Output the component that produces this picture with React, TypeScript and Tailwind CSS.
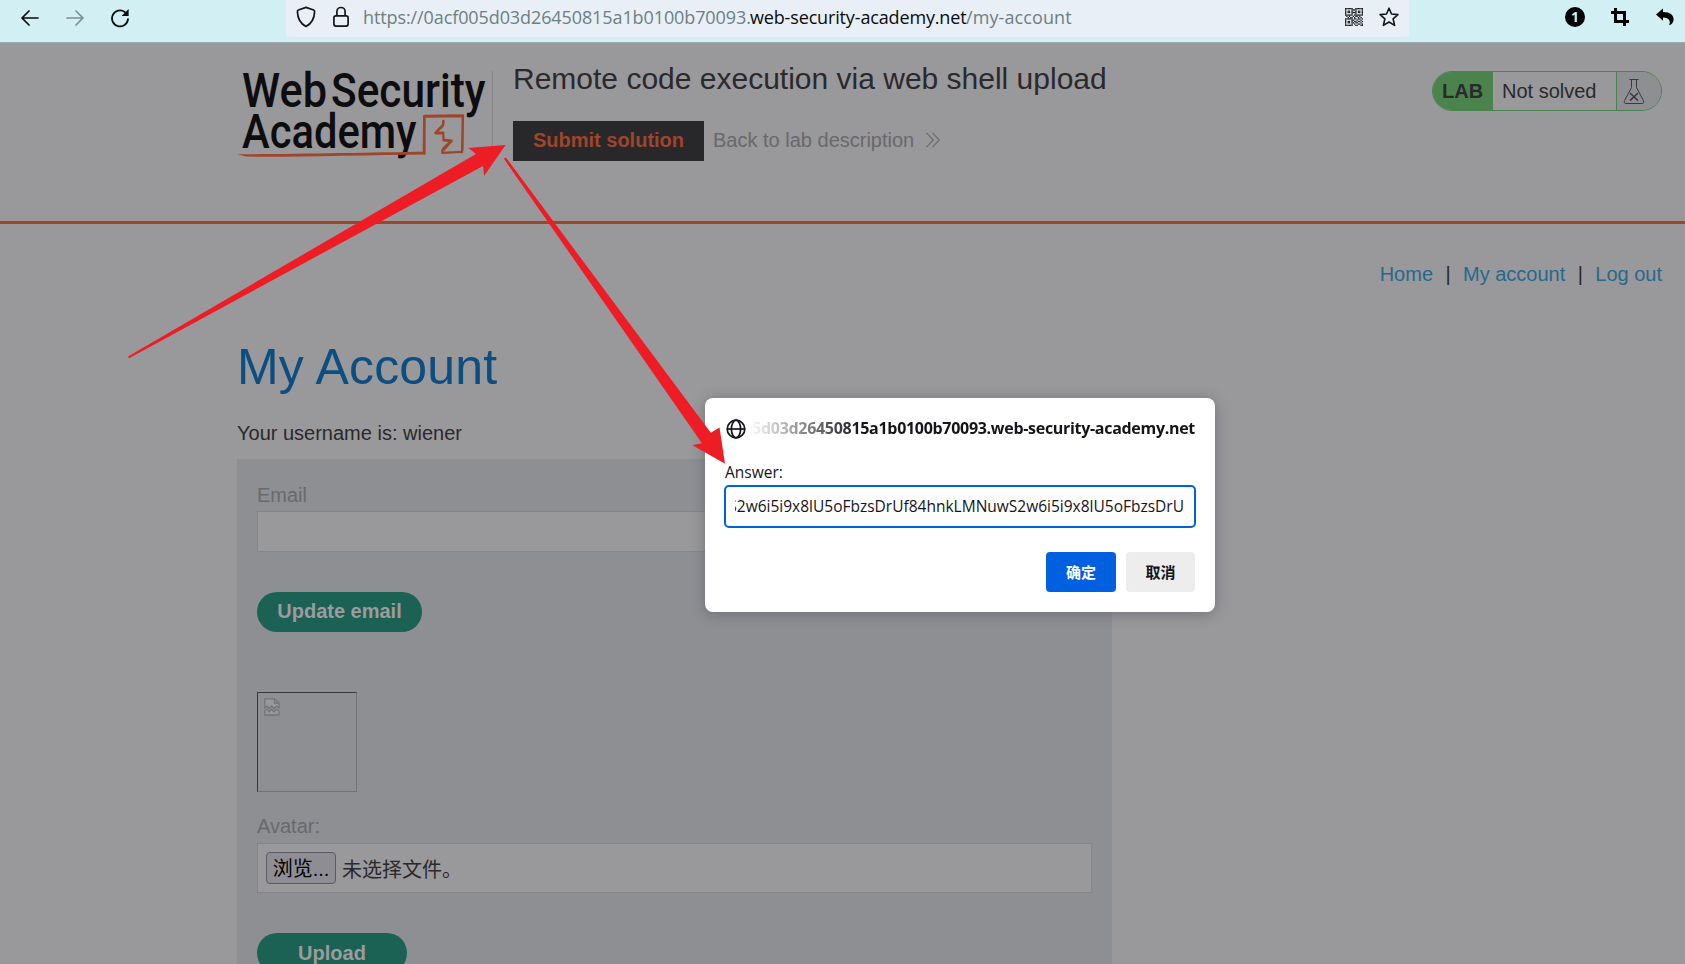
import React from "react";

const PageLogo = () => (
  <svg width="256" height="94" viewBox="237 69 256 94" className="block shrink-0">
    <g fill="#0d0d10" fontFamily="Roboto, sans-serif" fontWeight="500" fontSize="48.6">
      <text x="242" y="107.3" textLength="85" lengthAdjust="spacingAndGlyphs">Web</text>
      <text x="331" y="107.3" textLength="154.5" lengthAdjust="spacingAndGlyphs">Security</text>
      <text x="242" y="147.7" textLength="174.5" lengthAdjust="spacingAndGlyphs">Academy</text>
    </g>
    <g fill="none" stroke="#9e452c" strokeLinejoin="round" strokeLinecap="round">
      <path strokeWidth="2.2" d="M424.5 153.6 L424.6 115.8 L463 115.3 L462 152.3" />
      <path strokeWidth="1.8" d="M425 116.8 L463 116.3 M424 116 L423.6 153 M462.6 116 L462.6 150" />
      <path strokeWidth="2.3" d="M462 151.8 L442.3 152.8 C441.5 148.5 445 147 451.5 140.6 L443.5 139.6 L443.2 132.6 L435.5 132.8 L443.3 124.5 L443.4 121" />
      <path strokeWidth="1.8" d="M443.4 121 L442.6 126.5 L435.3 133 M452 141 L444 150 M436 133.6 L443 133.6 M443.5 140.6 L451 141.2" />
    </g>
    <path fill="#9e452c" d="M237.5 154.2 C290 154.4 370 152.4 425.3 151.8 L425.3 154.4 C370 155 300 157 246 156.6 Z" />
    <path stroke="#858488" strokeWidth="1" d="M492.5 71 V149" />
  </svg>
);

const Shield = () => (
  <svg width="20" height="22" viewBox="0 0 20 22" fill="none" stroke="#15141a" strokeWidth="1.7" strokeLinejoin="round">
    <path d="M10 1.4 L17.6 4 C18.4 4.3 18.7 4.8 18.6 5.6 C18.4 12 16.8 17 10 20.4 C3.2 17 1.6 12 1.4 5.6 C1.3 4.8 1.6 4.3 2.4 4 Z" />
  </svg>
);

const Lock = () => (
  <svg width="18" height="22" viewBox="0 0 18 22" fill="none" stroke="#15141a" strokeWidth="1.7">
    <rect x="1.9" y="9.9" width="14.2" height="10.2" rx="2" />
    <path d="M4.9 10 V5.6 a4.1 4.1 0 0 1 8.2 0 V10" />
  </svg>
);

const QR_ROWS = [
  "11111100111111",
  "10000111100001",
  "10110100101101",
  "10110111101101",
  "10000100100001",
  "11111101111111",
  "01010010110100",
  "00101101001010",
  "11111101101101",
  "10000110010010",
  "10110101101101",
  "10110110110010",
  "10000101001101",
  "11111100110011",
];

const Qr = () => (
  <svg width="18" height="18" viewBox="0 0 14 14" fill="#15141a">
    {QR_ROWS.flatMap((row, y) =>
      row.split("").map((c, x) => (c === "1" ? <rect key={`${x}-${y}`} x={x} y={y} width="1" height="1" /> : null))
    )}
  </svg>
);

const Globe = () => (
  <svg width="20" height="20" viewBox="0 0 20 20" fill="none" stroke="#15141a" strokeWidth="1.7" className="shrink-0">
    <circle cx="10" cy="10" r="8.8" />
    <ellipse cx="10" cy="10" rx="4.6" ry="8.8" />
    <path d="M1.5 10 H18.5" />
  </svg>
);

const Flask = () => (
  <svg width="22" height="27" viewBox="0 0 22 27" fill="none" stroke="#3a393d" strokeWidth="1">
    <path d="M6.5 1.5 H15.5 M8.5 1.5 V9.5 L1.6 22.5 C1 24 1.3 25.5 2.6 25.5 H19.4 C20.7 25.5 21 24 20.4 22.5 L13.5 9.5 V1.5" />
    <path strokeWidth="1.5" d="M7 15 L15 22.6 M15 15 L7 22.6" />
  </svg>
);

const BrokenImage = () => (
  <svg width="16" height="18" viewBox="0 0 16 18" fill="none" stroke="#747478" strokeWidth="1.3">
    <path fill="#98979a" d="M0.8 10 V0.8 H10.5 L15 5 V10 L12.5 8 L10 10.5 L7.5 8 L5 10.5 L2.8 8.2 Z" />
    <path d="M10.5 0.8 V5 H15" />
    <path fill="#98979a" d="M0.8 17 V13 L3 11.3 L5.2 13.8 L7.6 11.3 L10 13.8 L12.6 11.3 L15 13 V17 Z" />
  </svg>
);

const Toolbar = () => (
  <div className="flex h-[43px] items-start border-b border-[#9aabae] bg-[#d2eff3]">
    <div className="flex h-[35px] w-[286px] shrink-0 items-center pl-5">
      <svg width="20" height="20" viewBox="0 0 20 20" fill="none" stroke="#0b0b0d" strokeWidth="1.7" strokeLinecap="round" strokeLinejoin="round">
        <path d="M18 10 H2 M9 3 L2 10 L9 17" />
      </svg>
      <svg width="20" height="20" viewBox="0 0 20 20" fill="none" stroke="#7f9093" strokeWidth="1.7" strokeLinecap="round" strokeLinejoin="round" className="ml-[25px]">
        <path d="M2 10 H18 M11 3 L18 10 L11 17" />
      </svg>
      <svg width="20" height="20" viewBox="0 0 20 20" fill="none" stroke="#0b0b0d" strokeWidth="1.8" strokeLinecap="round" className="ml-[25px]">
        <path d="M18 11.2 A8 8 0 1 1 14.8 4" />
        <path fill="#0b0b0d" stroke="none" d="M18.6 1 V8 H11.6 Z" />
      </svg>
    </div>
    <div className="flex h-[37px] w-[1123px] shrink-0 items-center rounded-b bg-[#e8eff6] pb-[3px]">
      <div className="ml-2.5">
        <Shield />
      </div>
      <div className="ml-4">
        <Lock />
      </div>
      <div className="ml-[13px] flex font-['Open_Sans','Noto_Sans',sans-serif] text-[18px] leading-6 whitespace-pre text-[#6f7f80]">
        <span className="w-[387px] tracking-[-0.1px]">https://0acf005d03d26450815a1b0100b70093.</span>
        <span className="w-[216px] tracking-[-0.15px] text-[#0b0b0d]">web-security-academy.net</span>
        <span className="tracking-[0.1px]">/my-account</span>
      </div>
      <div className="mr-2.5 ml-auto flex items-center gap-4">
        <Qr />
        <svg width="20" height="20" viewBox="0 0 20 20" fill="none" stroke="#15141a" strokeWidth="1.6" strokeLinejoin="round">
          <path d="M10 1.2 L12.5 7 L18.9 7.6 L14.1 11.8 L15.6 18.4 L10 15 L4.4 18.4 L5.9 11.8 L1.1 7.6 L7.5 7 Z" />
        </svg>
      </div>
    </div>
    <div className="flex h-[34px] flex-1 items-center justify-end pr-[11px]">
      <span className="flex size-5 items-center justify-center rounded-full bg-black font-['Open_Sans',sans-serif] text-sm leading-none font-bold text-[#d2eff3]">1</span>
      <svg width="18" height="18" viewBox="0 0 18 18" fill="none" stroke="#000" strokeWidth="3" className="ml-[26px]">
        <path d="M0 4.5 H13.5 V18 M4.5 0 V13.5 H18" />
      </svg>
      <svg width="18" height="18" viewBox="0 0 18 18" fill="#000" className="ml-[27px]">
        <path d="M0 6.6 L7 0.6 V4 C14 4 17.6 7 17.6 11.4 C17.6 14 16 16.4 13 17.2 C14.6 15 14.6 9.8 7 9.6 V12.8 Z" />
      </svg>
    </div>
  </div>
);

const Header = () => (
  <header className="flex h-[181px] border-b-[3px] border-[#9e452c] pr-[23px] pl-[237px]">
    <div className="pt-[26px]">
      <PageLogo />
    </div>
    <div className="ml-5 pt-[18px]">
      <h2 className="text-[30px] leading-9 whitespace-nowrap text-[#2a292d]">Remote code execution via web shell upload</h2>
      <div className="mt-6 flex items-center">
        <button className="h-10 w-[191px] bg-[#28282b] pb-0.5 text-xl font-bold text-[#9e452c]">Submit solution</button>
        <a className="ml-[9px] flex items-center pb-0.5 text-xl whitespace-nowrap text-[#69686b]">
          Back to lab description
          <svg width="16" height="16" viewBox="0 0 16 16" fill="none" stroke="#69686b" strokeWidth="1.1" className="ml-[11px]">
            <path d="M1.5 0.8 L8.3 8 L1.5 15.2 M7.5 0.8 L14.3 8 L7.5 15.2" />
          </svg>
        </a>
      </div>
    </div>
    <div className="mt-7 ml-auto flex h-10 w-[230px] overflow-hidden rounded-full border border-[#4b834d] text-xl text-[#2a292d]">
      <div className="flex w-[60px] items-center bg-[#4b834d] pl-[9px] font-bold">LAB</div>
      <div className="flex flex-1 items-center border-r border-[#4b834d] pl-[9px]">Not solved</div>
      <div className="flex w-11 items-center bg-[#8e8f93] pl-1.5">
        <Flask />
      </div>
    </div>
  </header>
);

const Annotations = () => (
  <svg className="pointer-events-none absolute top-0 left-0" width="1685" height="964" viewBox="0 0 1685 964" fill="#ee1c24">
    <path d="M128 356.4 L476 154 L468.5 148 L505.6 145 L484.2 175.8 L483 166 L129 358.2 Z" />
    <path d="M503.8 158.6 L505.8 157.4 L710.8 432.8 L719.5 427.5 L725 463.8 L692.5 445.2 L702 443.3 Z" />
  </svg>
);

const Dialog = () => (
  <div className="absolute top-[398px] left-[705px] h-[214px] w-[510px] rounded-lg bg-white px-[19px] font-['Open_Sans','Noto_Sans_CJK_SC',sans-serif] text-[#15141a] shadow-[0_2px_14px_rgba(40,40,50,0.34)]">
    <div className="flex h-[61px] items-center pl-0.5">
      <Globe />
      <div className="ml-[3px] flex flex-1 justify-end overflow-hidden mask-[linear-gradient(to_right,transparent,black_110px)] pr-px pb-0.5 text-base font-bold tracking-[-0.3px] whitespace-nowrap">
        0acf005d03d26450815a1b0100b70093.web-security-academy.net
      </div>
    </div>
    <div className="flex h-[26px] items-center pt-0.5 pl-px text-[15.5px]">Answer:</div>
    <div className="flex h-[43px] w-[472px] items-center rounded-[5px] border-2 border-[#0060df] pr-2.5 pl-[9px]">
      <div className="flex flex-1 justify-end overflow-hidden text-[15.5px] whitespace-nowrap">
        <span>S2w6i5i9x8lU5oFbzsDrUf84hnkLMNuwS2w6i5i9x8lU5oFbzsDrU</span>
      </div>
    </div>
    <div className="mt-6 flex justify-end gap-2.5 pr-px text-[15px] font-bold">
      <button className="h-10 w-[70px] rounded bg-[#0060df] text-white">确定</button>
      <button className="h-10 w-[69px] rounded bg-[#ededee]">取消</button>
    </div>
  </div>
);

export default function App() {
  return (
    <div className="relative h-[964px] w-[1685px] overflow-hidden bg-[#99989b] font-['Liberation_Sans','Noto_Sans_CJK_SC',sans-serif] text-xl text-[#2a292d]">
      <Toolbar />
      <Header />
      <nav className="flex justify-end gap-[12.4px] pt-[35px] pr-[23px] leading-[30px]">
        <a className="text-[#27698c]">Home</a>
        <span>|</span>
        <a className="text-[#27698c]">My account</a>
        <span>|</span>
        <a className="text-[#27698c]">Log out</a>
      </nav>
      <main className="w-[1112px] pl-[237px]">
        <h1 className="mt-[48px] text-[50px] leading-[60px] tracking-[0.2px] text-[#0d4e80]">My Account</h1>
        <p className="mt-[21px] leading-[30px]">Your username is: wiener</p>
        <div className="mt-[11px] h-[520px] bg-[#8e8f93] px-5 pt-5">
          <label className="block leading-8 text-[#69696d]">Email</label>
          <div className="h-[41px] border border-[#86868a] bg-[#99989b]" />
          <button className="mt-10 block h-10 w-[165px] rounded-full bg-[#1b6154] pb-0.5 font-bold text-[#9c9b9e]">Update email</button>
          <div className="mt-[60px] size-[100px] border border-t-[#38363d] border-r-[#737277] border-b-[#737277] border-l-[#38363d] pt-[5px] pl-1.5">
            <BrokenImage />
          </div>
          <label className="mt-[18px] mb-px block leading-8 text-[#69696d]">Avatar:</label>
          <div className="flex h-[50px] items-center border border-[#86868a] bg-[#99989b] pl-2">
            <button className="h-8 w-[70px] rounded border border-[#5b5a63] bg-[#8e8d93] pt-0.5 leading-7 text-black">浏览...</button>
            <span className="ml-1.5 pt-[3px]">未选择文件。</span>
          </div>
          <button className="mt-10 block h-10 w-[150px] rounded-full bg-[#1b6154] font-bold text-[#9c9b9e]">Upload</button>
        </div>
      </main>
      <Dialog />
      <Annotations />
    </div>
  );
}
